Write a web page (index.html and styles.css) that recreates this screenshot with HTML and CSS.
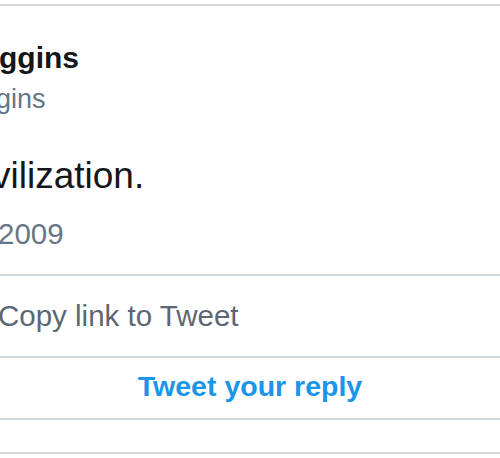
FILE: index.html
```html
<!DOCTYPE html>
<html>
<head>
<meta charset="utf-8">
<link rel="stylesheet" href="styles.css">
</head>
<body>
<div class="card">
  <div class="tweet">
    <div class="name">ggins</div>
    <div class="handle">gins</div>
    <div class="text">vilization.</div>
    <div class="date">2009</div>
  </div>
  <div class="copy">Copy link to Tweet</div>
  <div class="reply"><a class="reply-link">Tweet your reply</a></div>
  <div class="spacer"></div>
</div>
</body>
</html>
```

FILE: styles.css
```css
html, body {
  margin: 0;
  padding: 0;
  background: #ffffff;
  overflow: hidden;
}
body {
  font-family: "Liberation Sans", Arial, sans-serif;
  width: 500px;
  height: 458px;
}
.card {
  margin-top: 4px;
  border-top: 2px solid #d6d6d6;
  border-bottom: 2px solid #d6d6d6;
}
.tweet {
  padding: 34px 0 23px 0;
  border-bottom: 2px solid #cfd6de;
  white-space: nowrap;
}
.name {
  font-size: 30px;
  font-weight: bold;
  line-height: 36px;
  color: #14171a;
  text-indent: -1px;
}
.handle {
  margin-top: 7px;
  font-size: 27px;
  line-height: 32px;
  color: #657786;
  text-indent: -4px;
}
.text {
  margin-top: 39px;
  font-size: 37px;
  line-height: 44px;
  color: #14171a;
  text-indent: -8px;
}
.date {
  margin-top: 19px;
  font-size: 29.5px;
  line-height: 34px;
  color: #657786;
  text-indent: -2px;
}
.copy {
  padding: 23px 0 23px 0;
  font-size: 29.5px;
  line-height: 34px;
  color: #5b6874;
  border-bottom: 2px solid #cfd6de;
  white-space: nowrap;
  text-indent: -2px;
}
.reply {
  padding: 11px 0 15px 0;
  text-align: center;
  font-size: 28.5px;
  line-height: 34px;
  border-bottom: 2px solid #cfd6de;
}
.reply-link {
  font-weight: bold;
  color: #1b95e8;
}
.spacer {
  height: 32px;
}
```
